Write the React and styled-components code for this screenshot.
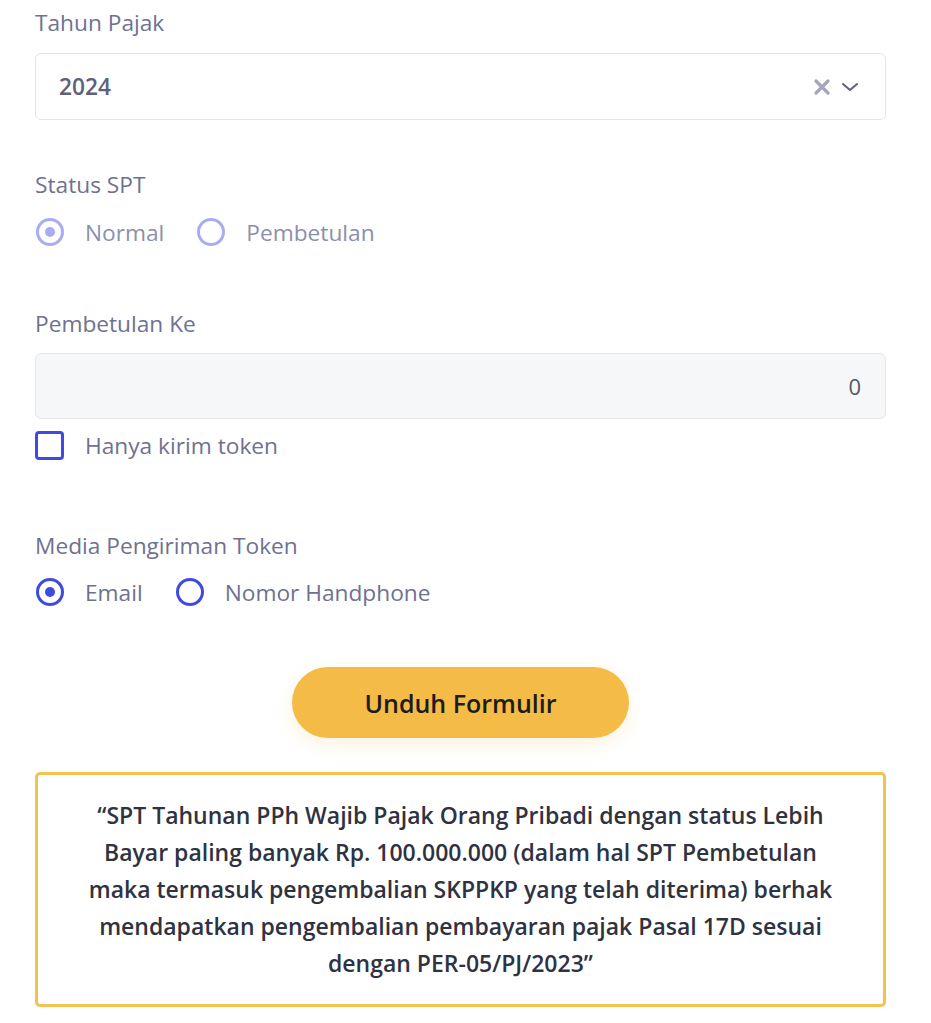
import React, { useState } from "react";
import styled, { createGlobalStyle } from "styled-components";

const GlobalStyle = createGlobalStyle`
  body {
    margin: 0;
    background: #ffffff;
    font-family: "Open Sans", "Noto Sans", sans-serif;
  }
`;

const Page = styled.div`
  padding: 5px 45px 16px 35px;
  display: flex;
  flex-direction: column;
`;

const Field = styled.div`
  display: flex;
  flex-direction: column;
  margin-bottom: ${(p) => p.gap || "0px"};
`;

const Label = styled.div`
  font-size: 22.7px;
  line-height: 36px;
  color: #6e7191;
  margin-bottom: ${(p) => p.mb || "12px"};
`;

const SelectBox = styled.div`
  display: flex;
  align-items: center;
  height: 65px;
  padding: 0 26px 0 23px;
  border: 1.5px solid #e3e5ec;
  border-radius: 6px;
  background: #fff;

  .value {
    flex: 1;
    font-size: 22.7px;
    font-weight: 600;
    color: #5e617d;
  }
  .icons {
    display: flex;
    align-items: center;
    gap: 10px;
  }
`;

const InputBox = styled.div`
  display: flex;
  align-items: center;
  justify-content: flex-end;
  height: 64px;
  padding: 0 24px;
  border: 1.5px solid #e5e7eb;
  border-radius: 6px;
  background: #f6f7f9;
  font-size: 22px;
  color: #55585f;
`;

const RadioRow = styled.div`
  display: flex;
  align-items: center;
  gap: 32px;
  height: 34px;
`;

const RadioItem = styled.label`
  display: flex;
  align-items: center;
  gap: 21px;
  font-size: 22.7px;
  color: ${(p) => (p.disabled ? "#8c8fab" : "#6e7191")};
  cursor: ${(p) => (p.disabled ? "default" : "pointer")};
`;

const RadioCircle = styled.span`
  width: 22px;
  height: 22px;
  border-radius: 50%;
  border: 3px solid ${(p) => (p.disabled ? "#a8adf3" : "#3f4be0")};
  display: flex;
  align-items: center;
  justify-content: center;
  flex-shrink: 0;
  margin-left: 1px;

  &::after {
    content: "";
    width: 10px;
    height: 10px;
    border-radius: 50%;
    background: ${(p) => (p.disabled ? "#a8adf3" : "#3f4be0")};
    display: ${(p) => (p.checked ? "block" : "none")};
  }
`;

const CheckRow = styled.label`
  display: flex;
  align-items: center;
  gap: 21px;
  margin-top: 11px;
  font-size: 22.7px;
  color: #6e7191;
  cursor: pointer;
`;

const CheckBox = styled.span`
  width: 23px;
  height: 23px;
  border: 3px solid #3f4be0;
  border-radius: 4px;
  flex-shrink: 0;
`;

const ButtonWrap = styled.div`
  display: flex;
  justify-content: center;
  margin: 58px 0 34px;
`;

const Button = styled.button`
  width: 337px;
  height: 71px;
  border: none;
  border-radius: 36px;
  background: #f4bb46;
  box-shadow: 0 6px 18px rgba(244, 187, 70, 0.18);
  font-family: "Open Sans", sans-serif;
  font-size: 25px;
  font-weight: 600;
  color: #1c1c1c;
  cursor: pointer;
`;

const Notice = styled.div`
  border: 3px solid #f3c250;
  border-radius: 5px;
  padding: 22px 40px 22px;
  text-align: center;
  font-size: 23px;
  font-weight: 600;
  line-height: 37px;
  color: #2f3241;
`;

const Radio = ({ label, checked, disabled, onClick }) => (
  <RadioItem disabled={disabled} onClick={onClick}>
    <RadioCircle checked={checked} disabled={disabled} />
    {label}
  </RadioItem>
);

const App = () => {
  const [media, setMedia] = useState("email");

  return (
    <Page>
      <GlobalStyle />
      <Field gap="47px">
        <Label mb="12px">Tahun Pajak</Label>
        <SelectBox>
          <div className="value">2024</div>
          <div className="icons">
            <svg width="18" height="18" viewBox="0 0 18 18">
              <path d="M3 3 L15 15 M15 3 L3 15" stroke="#a3a5bb" strokeWidth="3.2" strokeLinecap="round" />
            </svg>
            <svg width="18" height="12" viewBox="0 0 18 12">
              <path d="M2 3 L9 9 L16 3" stroke="#5e617d" strokeWidth="2" fill="none" strokeLinecap="round" strokeLinejoin="round" />
            </svg>
          </div>
        </SelectBox>
      </Field>

      <Field gap="57px">
        <Label mb="12px">Status SPT</Label>
        <RadioRow>
          <Radio label="Normal" checked disabled />
          <Radio label="Pembetulan" disabled />
        </RadioRow>
      </Field>

      <Field gap="67px">
        <Label mb="11px">Pembetulan Ke</Label>
        <InputBox>0</InputBox>
        <CheckRow>
          <CheckBox />
          Hanya kirim token
        </CheckRow>
      </Field>

      <Field>
        <Label mb="11px">Media Pengiriman Token</Label>
        <RadioRow>
          <Radio label="Email" checked={media === "email"} onClick={() => setMedia("email")} />
          <Radio label="Nomor Handphone" checked={media === "hp"} onClick={() => setMedia("hp")} />
        </RadioRow>
      </Field>

      <ButtonWrap>
        <Button>Unduh Formulir</Button>
      </ButtonWrap>

      <Notice>
        “SPT Tahunan PPh Wajib Pajak Orang Pribadi dengan status Lebih Bayar paling banyak Rp. 100.000.000 (dalam hal SPT Pembetulan maka termasuk pengembalian SKPPKP yang telah diterima) berhak mendapatkan pengembalian pembayaran pajak Pasal 17D sesuai dengan PER-05/PJ/2023”
      </Notice>
    </Page>
  );
};

export default App;
